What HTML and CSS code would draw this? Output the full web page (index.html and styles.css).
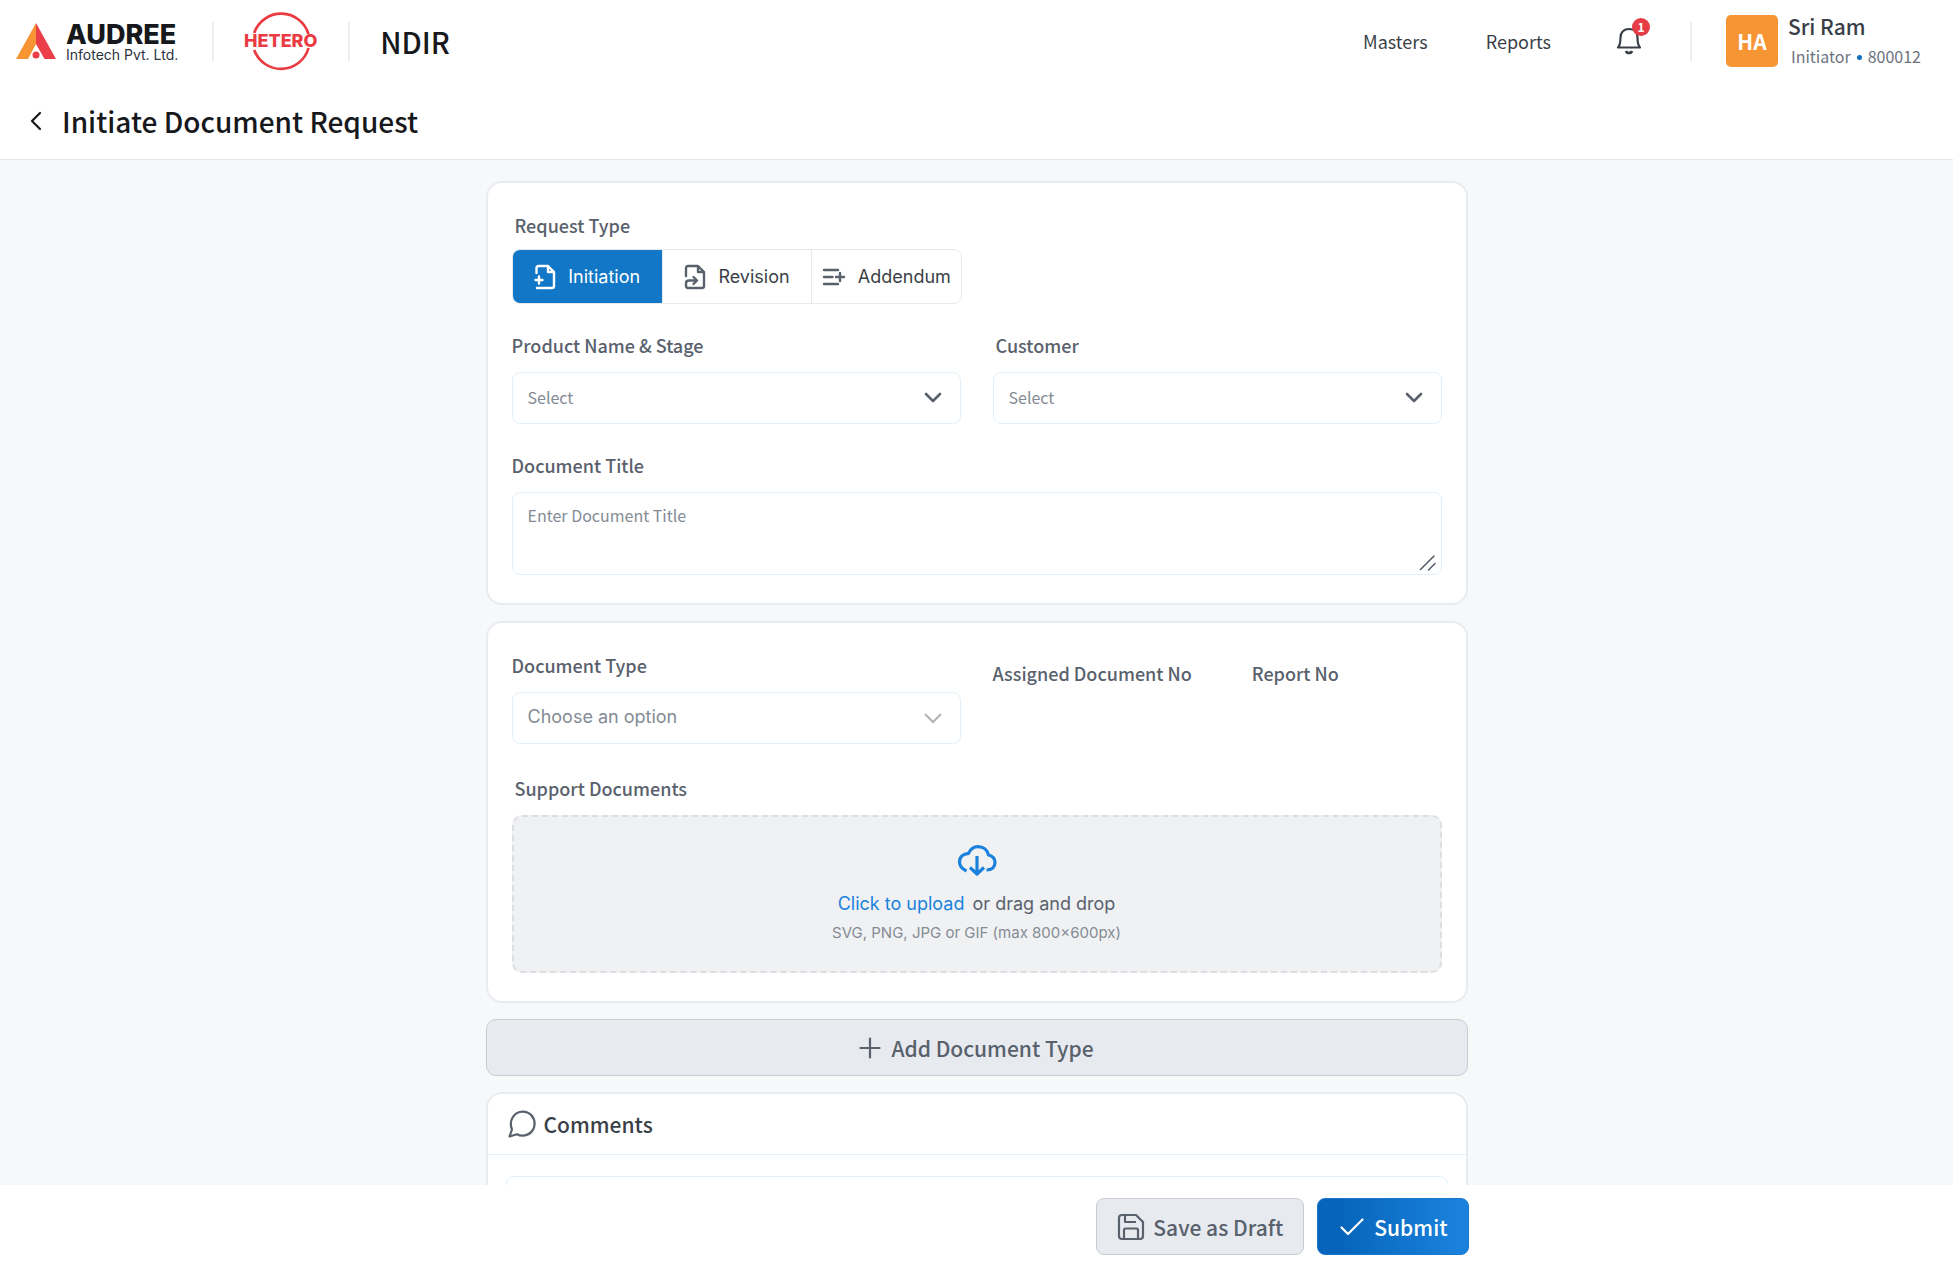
FILE: index.html
```html
<!DOCTYPE html>
<html lang="en">
<head>
  <meta charset="UTF-8" />
  <meta name="viewport" content="width=device-width, initial-scale=1.0"/>
  <title>NDIR - Initiate Document Request</title>
  <link rel="stylesheet" href="styles.css">
</head>
<body>

  <!-- Top bar -->
  <header class="topbar">
    <div class="audree">
      <svg class="audree__mark" width="40" height="36" viewBox="0 0 40 36">
        <path d="M20 0 L0 36 H12 L20 21 Z" fill="#f79433"/>
        <path d="M20 0 L40 36 H28.500 L20 21 Z" fill="#ea3f48"/>
        <circle cx="20" cy="32" r="3.500" fill="#ea3f48"/>
      </svg>
      <div class="audree__text">
        <span class="audree__name">AUDREE</span>
        <span class="audree__sub">Infotech Pvt. Ltd.</span>
      </div>
    </div>
    <span class="topbar__divider"></span>
    <svg class="hetero" width="74" height="62" viewBox="0 0 74 62">
      <g fill="none" stroke="#ea3b43" stroke-width="2.700">
        <path d="M10.200 23 A28.500 28.500 0 0 1 64.500 24"/>
        <path d="M10.200 40 A28.500 28.500 0 0 0 64.500 38"/>
      </g>
      <text x="0" y="37" class="hetero__text">HETERO</text>
    </svg>
    <span class="topbar__divider"></span>
    <span class="topbar__app">NDIR</span>

    <nav class="nav">
      <a class="nav__link" href="#">Masters</a>
      <a class="nav__link" href="#">Reports</a>
    </nav>
    <button class="bell" type="button" aria-label="Notifications">
      <svg width="26" height="28" viewBox="0 0 26 28" fill="none" stroke="#3a3f47" stroke-width="2.200" stroke-linejoin="round">
        <path d="M2 20.500 C4 18.500 4.500 16 4.500 10.500 C4.500 5 8 2 13 2 C18 2 21.500 5 21.500 10.500 C21.500 16 22 18.500 24 20.500 Z"/>
        <path d="M10 24 C10.600 25.600 11.500 26 13 26 C14.500 26 15.400 25.600 16 24" stroke-width="2.600"/>
      </svg>
      <span class="bell__badge">1</span>
    </button>
    <span class="topbar__divider"></span>
    <div class="user">
      <span class="user__avatar">HA</span>
      <div class="user__info">
        <span class="user__name">Sri Ram</span>
        <span class="user__role">Initiator <i class="user__dot"></i> 800012</span>
      </div>
    </div>
  </header>

  <!-- Page title -->
  <div class="titlebar">
    <a class="titlebar__back" href="#" aria-label="Back">
      <svg width="12" height="20" viewBox="0 0 12 20" fill="none" stroke="#16181b" stroke-width="2.200" stroke-linecap="round" stroke-linejoin="round">
        <path d="M10 2 L2 10 L10 18"/>
      </svg>
    </a>
    <h1 class="titlebar__title">Initiate Document Request</h1>
  </div>

  <main class="content">
    <form class="form" id="request-form">

      <!-- Request -->
      <section class="card">
        <fieldset class="field field--type">
          <legend class="label label--inset">Request Type</legend>
          <div class="toggle">
            <label class="toggle__item">
              <input type="radio" name="type" checked>
              <svg width="22" height="26" viewBox="0 0 22 26" fill="none" stroke="currentColor" stroke-width="2.400" stroke-linecap="round" stroke-linejoin="round">
                <path d="M2.500 9 V4 Q2.500 2 4.500 2 H14 L20 8 V22 Q20 24 18 24 H3"/>
                <path d="M14 2.500 V8 H19.500"/>
                <path d="M5 12.500 V19.500 M1.500 16 H8.500"/>
              </svg>
              <span>Initiation</span>
            </label>
            <label class="toggle__item">
              <input type="radio" name="type">
              <svg width="22" height="26" viewBox="0 0 22 26" fill="none" stroke="currentColor" stroke-width="2.400" stroke-linecap="round" stroke-linejoin="round">
                <path d="M2 12 V4 Q2 2 4 2 H14 L20 8 V22 Q20 24 18 24 H4 Q2 24 2 22 V19.500 Q2 16.500 5 16.500 H12"/>
                <path d="M14 2.500 V8 H19.500"/>
                <path d="M9.500 13 L13 16.500 L9.500 20"/>
              </svg>
              <span>Revision</span>
            </label>
            <label class="toggle__item">
              <input type="radio" name="type">
              <svg width="24" height="18" viewBox="0 0 24 18" fill="none" stroke="currentColor" stroke-width="2.400" stroke-linecap="round">
                <path d="M2 2 H16 M2 9 H10.500 M2 16 H16 M14 9 H22 M18 5 V13"/>
              </svg>
              <span>Addendum</span>
            </label>
          </div>
        </fieldset>

        <div class="row">
          <div class="field">
            <label class="label" for="product">Product Name &amp; Stage</label>
            <div class="select">
              <select id="product">
                <option>Select</option>
              </select>
              <svg width="18" height="12" viewBox="0 0 18 12" fill="none" stroke="#59616d" stroke-width="2.600" stroke-linecap="round" stroke-linejoin="round">
                <path d="M2 2 L9 9 L16 2"/>
              </svg>
            </div>
          </div>
          <div class="field">
            <label class="label label--inset" for="customer">Customer</label>
            <div class="select">
              <select id="customer">
                <option>Select</option>
              </select>
              <svg width="18" height="12" viewBox="0 0 18 12" fill="none" stroke="#59616d" stroke-width="2.600" stroke-linecap="round" stroke-linejoin="round">
                <path d="M2 2 L9 9 L16 2"/>
              </svg>
            </div>
          </div>
        </div>

        <div class="field">
          <label class="label" for="title">Document Title</label>
          <div class="textarea">
            <textarea id="title" placeholder="Enter Document Title"></textarea>
            <svg width="18" height="16" viewBox="0 0 18 16" fill="none" stroke="#59616d" stroke-width="1.600" stroke-linecap="round">
              <path d="M1.500 14.500 L15 1 M9.500 15 L16 8.500"/>
            </svg>
          </div>
        </div>
      </section>

      <!-- Document -->
      <section class="card card--document">
        <div class="row">
          <div class="field">
            <label class="label" for="doc-type">Document Type</label>
            <div class="select select--large">
              <select id="doc-type">
                <option>Choose an option</option>
              </select>
              <svg width="18" height="12" viewBox="0 0 18 12" fill="none" stroke="#afb3b9" stroke-width="2">
                <path d="M1 2 L9 10 L17 2"/>
              </svg>
            </div>
          </div>
          <div class="numbers">
            <span class="label">Assigned Document No</span>
            <span class="label">Report No</span>
          </div>
        </div>

        <div class="field">
          <span class="label label--inset">Support Documents</span>
          <label class="dropzone">
            <input type="file">
            <svg width="40" height="32" viewBox="0 0 40 32" fill="none" stroke="#1a82dd" stroke-width="3.200" stroke-linejoin="round">
              <path d="M9.500 27 C4.500 24.500 2.500 21.500 2.500 18 C2.500 13 6 9.800 11.500 9.300 C13.500 5 16.500 2.600 21 2.600 C26.500 2.600 30.500 6 31.500 11 C35.500 12 38 15 38 18.500 C38 23 34.800 26 29.500 26"/>
              <path d="M20 12 V30 M13 23.500 L20 30 L27 23.500"/>
            </svg>
            <span class="dropzone__text"><span class="dropzone__link">Click to upload</span> or drag and drop</span>
            <span class="dropzone__hint">SVG, PNG, JPG or GIF (max 800×600px)</span>
          </label>
        </div>
      </section>

      <button class="btn btn--add" type="button">
        <svg width="22" height="22" viewBox="0 0 22 22" fill="none" stroke="currentColor" stroke-width="2.200" stroke-linecap="round">
          <path d="M11 1.500 V20.500 M1.500 11 H20.500"/>
        </svg>
        Add Document Type
      </button>

      <!-- Comments -->
      <section class="comments">
        <div class="comments__head">
          <svg width="28" height="28" viewBox="0 0 28 28" fill="none" stroke="#59616d" stroke-width="2.200" stroke-linejoin="round">
            <path d="M1.500 26.500 L4 19.500 C0.500 11.500 5.500 1.600 14.800 1.600 C21.600 1.600 26.600 7 26.600 13.600 C26.600 20.400 21.400 25.600 14.600 25.600 C12.400 25.600 10.800 25.200 9 24.200 Z"/>
          </svg>
          <label class="comments__title" for="comment">Comments</label>
        </div>
        <div class="comments__body">
          <textarea class="comments__input" id="comment"></textarea>
        </div>
      </section>
    </form>
  </main>

  <!-- Actions -->
  <footer class="footer">
    <div class="footer__inner">
      <button class="btn btn--draft" type="button">
        <svg width="28" height="28" viewBox="0 0 28 28" fill="none" stroke="currentColor" stroke-width="2.200" stroke-linejoin="round">
          <path d="M5 2 H19 L26 9 V23 Q26 26 23 26 H5 Q2 26 2 23 V5 Q2 2 5 2 Z"/>
          <path d="M8 2.500 V9 H19"/>
          <path d="M7 26 V17 Q7 15.500 8.500 15.500 H19.500 Q21 15.500 21 17 V26"/>
        </svg>
        Save as Draft
      </button>
      <button class="btn btn--submit" type="submit" form="request-form">
        <svg width="24" height="18" viewBox="0 0 24 18" fill="none" stroke="currentColor" stroke-width="2.200" stroke-linecap="round" stroke-linejoin="round">
          <path d="M1.500 9.500 L8 16 L22.500 1.500"/>
        </svg>
        Submit
      </button>
    </div>
  </footer>

</body>
</html>
```
FILE: styles.css
```css
* {
  box-sizing: border-box;
  margin: 0;
  padding: 0;
}

body {
  display: flex;
  flex-direction: column;
  height: 100vh;
  overflow: hidden;
  background-color: #fff;
  color: #3a3f47;
  font-family: "Noto Sans CJK SC", sans-serif;
  font-size: 18px;
  line-height: 24px;
}

button,
select,
textarea {
  font: inherit;
  color: inherit;
}

a {
  color: inherit;
  text-decoration: none;
}

/* Top bar */
.topbar {
  display: flex;
  align-items: center;
  height: 82px;
  flex-shrink: 0;
  padding: 0 32px 0 16px;
}

.topbar__divider {
  width: 2px;
  height: 39px;
  background-color: #ececf1;
}

.audree {
  display: flex;
  align-items: center;
  gap: 10px;
  margin-right: 34px;
}

.audree__text {
  display: flex;
  flex-direction: column;
  padding-top: 4px;
  font-family: Inter, sans-serif;
}

.audree__name {
  font-size: 27px;
  font-weight: 800;
  line-height: 24px;
  color: #16181b;
}

.audree__sub {
  font-size: 14px;
  line-height: 16px;
  color: #2d333d;
}

.hetero {
  margin: 0 30px;
}

.hetero__text {
  fill: #ea3b43;
  font-family: Inter, sans-serif;
  font-size: 18px;
  font-weight: 800;
}

.topbar__app {
  margin-left: 30px;
  font-size: 29px;
  font-weight: 500;
  color: #16181b;
}

.nav {
  display: flex;
  gap: 58px;
  margin-left: auto;
}

.bell {
  position: relative;
  display: flex;
  margin: 0 48px 0 65px;
  border: none;
  background: none;
  cursor: pointer;
}

.bell__badge {
  position: absolute;
  top: -9px;
  right: -8px;
  width: 18px;
  height: 18px;
  border-radius: 50%;
  background-color: #e63c46;
  color: #fff;
  font-size: 12px;
  font-weight: 700;
  line-height: 18px;
  text-align: center;
}

.user {
  display: flex;
  align-items: center;
  gap: 10px;
  margin-left: 34px;
}

.user__avatar {
  width: 52px;
  height: 52px;
  border-radius: 5px;
  background-color: #f79433;
  color: #fff;
  font-size: 21px;
  font-weight: 700;
  line-height: 52px;
  text-align: center;
}

.user__info {
  display: flex;
  flex-direction: column;
  gap: 6px;
}

.user__name {
  font-size: 21px;
  font-weight: 500;
}

.user__role {
  display: flex;
  align-items: center;
  gap: 6px;
  padding-left: 3px;
  font-size: 16px;
  color: #6b727d;
}

.user__dot {
  width: 5px;
  height: 5px;
  margin-top: 2px;
  border-radius: 50%;
  background-color: #0f6cbf;
}

/* Page title */
.titlebar {
  display: flex;
  align-items: center;
  gap: 20px;
  height: 78px;
  flex-shrink: 0;
  padding: 0 30px;
  border-bottom: 1px solid #e6e7ec;
}

.titlebar__back {
  display: flex;
}

.titlebar__title {
  font-size: 28px;
  font-weight: 500;
  color: #16181b;
}

/* Form */
.content {
  flex: 1;
  min-height: 0;
  overflow: hidden;
  padding-top: 21px;
  background-color: #f6f8fa;
}

.form {
  display: flex;
  flex-direction: column;
  gap: 16px;
  max-width: 982px;
  margin: 0 auto;
}

.card {
  display: flex;
  flex-direction: column;
  gap: 29px;
  padding: 30px 24px 28px;
  border: 2px solid #e8ebef;
  border-radius: 16px;
  background-color: #fff;
}

.card--document {
  gap: 32px;
}

.row {
  display: grid;
  grid-template-columns: 1fr 1fr;
  gap: 32px;
}

.field {
  display: flex;
  flex-direction: column;
  gap: 15px;
  min-width: 0;
  border: none;
}

.label {
  font-weight: 500;
  color: #59616d;
}

.label--inset {
  padding-left: 3px;
}

/* Request type */
.field--type {
  display: block;
}

.toggle {
  display: grid;
  grid-template-columns: repeat(3, 1fr);
  width: 450px;
  max-width: 100%;
  height: 55px;
  margin-top: 12px;
  border: 1px solid #e6eaee;
  border-radius: 8px;
  overflow: hidden;
}

.toggle__item {
  display: flex;
  align-items: center;
  justify-content: center;
  gap: 12px;
  font-family: Inter, sans-serif;
  cursor: pointer;
}

.toggle__item + .toggle__item {
  border-left: 1px solid #e6eaee;
}

.toggle__item input,
.dropzone input {
  position: absolute;
  opacity: 0;
  pointer-events: none;
}

.toggle__item svg {
  color: #59616d;
}

.toggle__item:has(:checked),
.toggle__item:has(:checked) svg {
  background-color: #1177c6;
  color: #fff;
}

/* Inputs */
.select,
.textarea {
  position: relative;
}

.select select,
.textarea textarea,
.comments__input {
  display: block;
  width: 100%;
  border: 1px solid #e3f0f9;
  border-radius: 8px;
  background-color: #fff;
  color: #848b95;
  font-size: 16px;
}

.select select {
  height: 52px;
  padding: 0 48px 2px 15px;
  appearance: none;
}

.select--large select {
  font-family: Inter, sans-serif;
  font-size: 18px;
}

.select svg {
  position: absolute;
  top: 20px;
  right: 19px;
  pointer-events: none;
}

.textarea textarea {
  height: 83px;
  padding: 10px 15px;
  resize: none;
}

.textarea textarea::placeholder {
  color: #848b95;
}

.textarea svg {
  position: absolute;
  right: 5px;
  bottom: 4px;
  pointer-events: none;
}

.numbers {
  display: flex;
  align-items: flex-start;
  gap: 60px;
  padding-top: 8px;
}

.dropzone {
  display: flex;
  flex-direction: column;
  align-items: center;
  height: 158px;
  padding-top: 27px;
  border: 2px dashed #dcdee2;
  border-radius: 10px;
  background-color: #f0f1f3;
  color: #59616d;
  font-family: Inter, sans-serif;
  cursor: pointer;
}

.dropzone__text {
  margin-top: 16px;
}

.dropzone__link {
  margin-right: 3px;
  color: #1a82dd;
}

.dropzone__hint {
  margin-top: 5px;
  font-size: 15px;
  color: #848b95;
}

/* Buttons */
.btn {
  display: flex;
  align-items: center;
  justify-content: center;
  gap: 10px;
  height: 57px;
  border: 1px solid #c9ccd3;
  border-radius: 8px;
  background-color: #e7eaef;
  color: #59616d;
  font-size: 21px;
  font-weight: 500;
  cursor: pointer;
}

.btn--add {
  border-radius: 10px;
}

.btn--draft {
  gap: 8px;
  padding: 0 20px;
}

.btn--submit {
  padding: 0 20px 0 22px;
  border-color: #1a78cc;
  background: linear-gradient(90deg, #0665ba 15%, #1a82dd 95%);
  color: #fff;
}

/* Comments */
.comments {
  border: 2px solid #e8ebef;
  border-radius: 16px;
  background-color: #fff;
}

.comments__head {
  display: flex;
  align-items: center;
  gap: 8px;
  height: 61px;
  padding: 0 20px;
  border-bottom: 1px solid #e3f0f9;
}

.comments__title {
  font-size: 21px;
  font-weight: 500;
}

.comments__body {
  padding: 21px 18px 20px;
}

.comments__input {
  height: 120px;
  padding: 10px 15px;
  resize: none;
}

/* Footer */
.footer {
  flex-shrink: 0;
  padding: 13px 0 14px;
  background-color: #fff;
}

.footer__inner {
  display: flex;
  justify-content: flex-end;
  gap: 13px;
  max-width: 984px;
  margin: 0 auto;
}

@media (max-width: 768px) {
  .row {
    grid-template-columns: 1fr;
  }

  .topbar,
  .numbers {
    flex-wrap: wrap;
    height: auto;
  }
}
```
